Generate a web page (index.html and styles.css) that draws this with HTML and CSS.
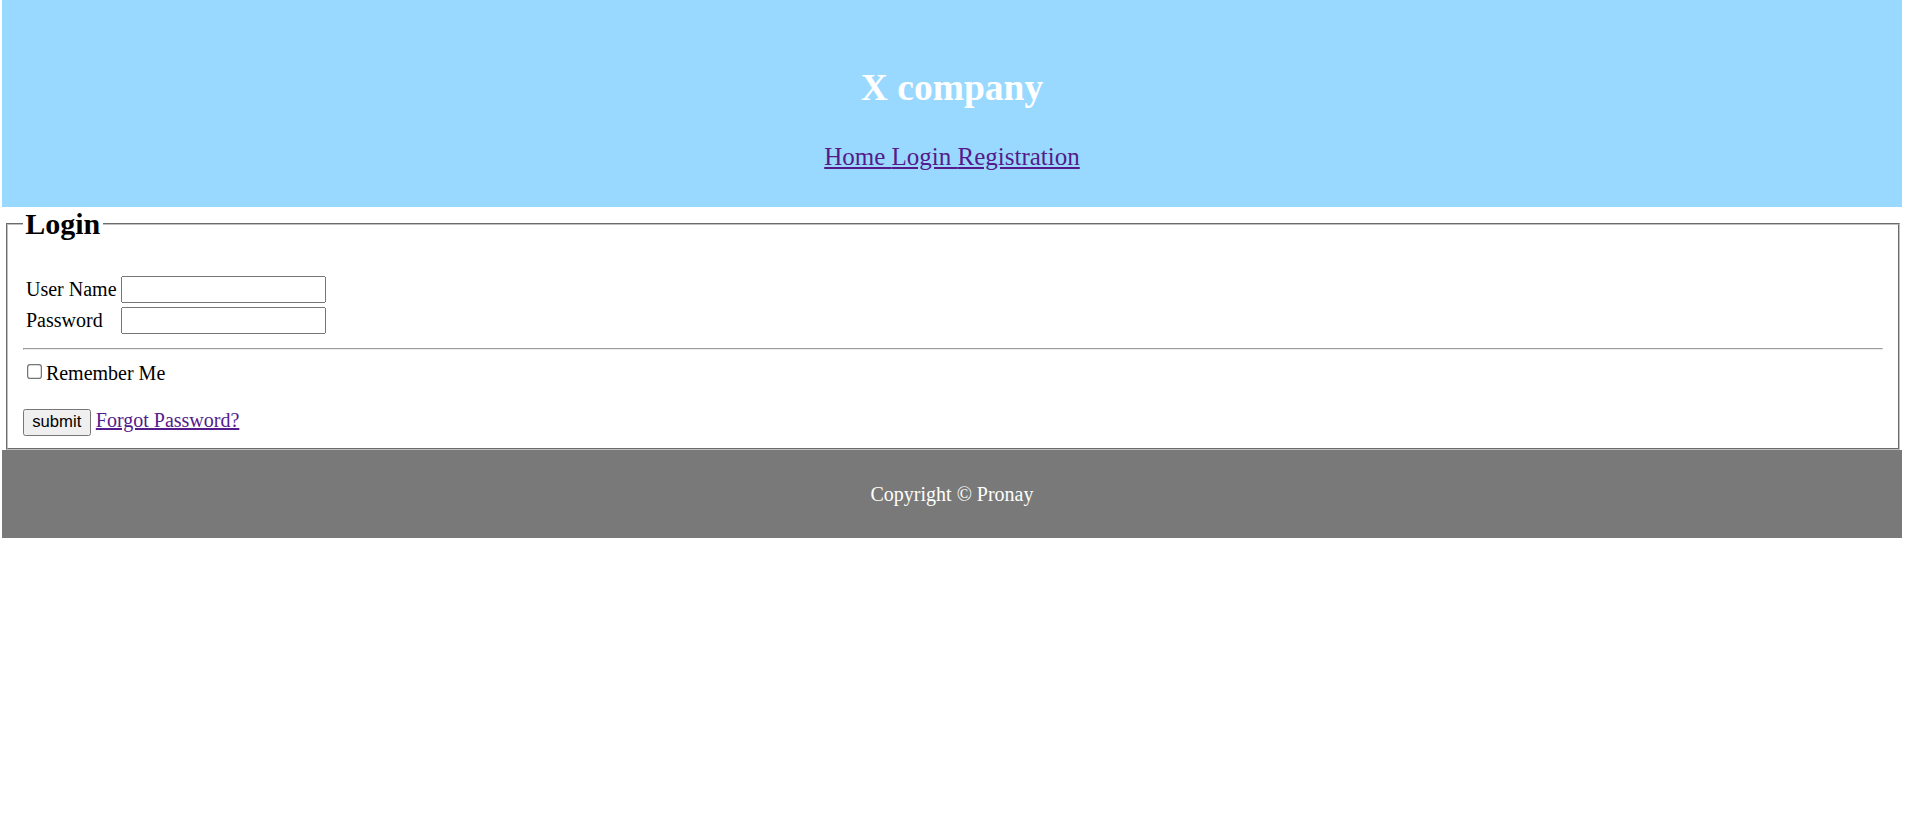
FILE: index.html
```html
<!DOCTYPE html>
<html lang="en">
<head>
<meta charset="utf-8">
<title>X company</title>
<link rel="stylesheet" href="styles.css">
</head>
<body>
<header class="site-header">
  <h1 class="brand">X company</h1>
  <nav class="nav"><a href="#">Home </a><a href="#">Login </a><a href="#">Registration</a></nav>
</header>
<fieldset class="login">
  <legend class="login-title">Login</legend>
  <form class="login-form">
    <table class="fields">
      <tr><td>User Name</td><td><input class="field" type="text"></td></tr>
      <tr><td>Password</td><td><input class="field" type="password"></td></tr>
    </table>
    <hr class="sep">
    <div class="remember"><input type="checkbox" id="rem" class="check"><label for="rem">Remember Me</label></div>
    <div class="actions"><button type="button" class="submit">submit</button> <a href="#">Forgot Password?</a></div>
  </form>
</fieldset>
<footer class="site-footer">
  <p class="copy">Copyright © Pronay</p>
</footer>
</body>
</html>
```
FILE: styles.css
```css
html {
  zoom: 1.25;
}
body {
  margin: 0 8px 0 1.6px;
  font-family: "Liberation Serif", "Times New Roman", serif;
  font-size: 16px;
  color: #000;
  background: #fff;
}
a {
  color: #551a8b;
}
.site-header {
  background: #99d9ff;
  text-align: center;
  padding: 52.6px 0 29.4px;
}
.brand {
  margin: 0 0 27.1px;
  font-size: 30px;
  font-weight: bold;
  color: #fff;
}
.nav {
  font-size: 20px;
}
.login {
  margin: 0 2px 0 3px;
  padding: 0.35em 0.75em 10px;
  border: 2px groove rgb(192, 192, 192);
}
.login-title {
  font-size: 24px;
  font-weight: bold;
  padding: 0 2px;
}
.login-form {
  margin: 0;
}
.fields {
  margin-top: 19.7px;
}
.field {
  width: 164px;
  box-sizing: border-box;
}
.sep {
  margin: 9px 0 8px;
}
.remember {
  line-height: normal;
}
.check {
  margin: 3px 2px 3px 3.5px;
}
.actions {
  margin-top: 19px;
}
.submit {
  font-family: "Liberation Sans", Arial, sans-serif;
  font-size: 13.333px;
}
.site-footer {
  background: #797979;
  color: #fff;
  text-align: center;
  padding: 10px 0;
}
.copy {
  margin: 16px 0;
}
```
